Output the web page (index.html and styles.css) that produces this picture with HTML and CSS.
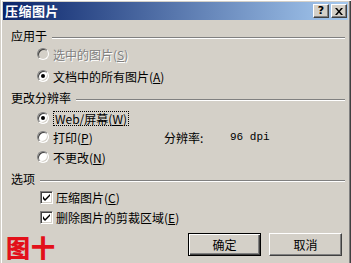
FILE: index.html
```html
<!DOCTYPE html>
<html>
<head>
<meta charset="utf-8">
<link rel="stylesheet" href="styles.css">
</head>
<body>
<div class="win">
  <div class="titlebar">
    <span class="title">压缩图片</span>
    <div class="tbtns">
      <span class="tbtn help">?</span>
      <span class="tbtn close"><svg width="8" height="7" viewBox="0 0 8 7"><path d="M0 0h2l2 2.5L6 0h2L5 3.5 8 7H6L4 4.5 2 7H0l3-3.5z" fill="#000"/></svg></span>
    </div>
  </div>
  <div class="content">
    <div class="ghead h1"><span>应用于</span><i class="rule"></i></div>
    <div class="opt r1 disabled"><span class="radio"></span><span class="lbl">选中的图片(<u>S</u>)</span></div>
    <div class="opt r2"><span class="radio on"></span><span class="lbl">文档中的所有图片(<u>A</u>)</span></div>

    <div class="ghead h2"><span>更改分辨率</span><i class="rule"></i></div>
    <div class="opt r3"><span class="radio on"></span><span class="lbl focus">Web/屏幕(<u>W</u>)</span></div>
    <div class="opt r4"><span class="radio"></span><span class="lbl w-print">打印(<u>P</u>)</span><span class="res">分辨率:</span><span class="dpi">96 dpi</span></div>
    <div class="opt r5"><span class="radio"></span><span class="lbl">不更改(<u>N</u>)</span></div>

    <div class="ghead h3"><span>选项</span><i class="rule"></i></div>
    <div class="opt c1"><span class="check"><svg width="7" height="7" viewBox="0 0 7 7"><path d="M0 2v3l2 2 5-5V-0L2 5z" fill="#000"/></svg></span><span class="lbl">压缩图片(<u>C</u>)</span></div>
    <div class="opt c2"><span class="check"><svg width="7" height="7" viewBox="0 0 7 7"><path d="M0 2v3l2 2 5-5V-0L2 5z" fill="#000"/></svg></span><span class="lbl">删除图片的剪裁区域(<u>E</u>)</span></div>

    <div class="footer">
      <span class="fig">图十</span>
      <div class="btns">
        <span class="btn default">确定</span>
        <span class="btn">取消</span>
      </div>
    </div>
  </div>
</div>
</body>
</html>
```
FILE: styles.css
```css
html, body {
  margin: 0;
  padding: 0;
  background: #D4D0C8;
}
.win {
  width: 351px;
  height: 263px;
  box-sizing: border-box;
  background: #D4D0C8;
  border-left: 1px solid #D4D0C8;
  box-shadow: inset 1px 1px 0 #fff, inset -1px 0 0 #404040, inset -2px 0 0 #808080;
  padding: 2px 2px 0 2px;
  overflow: hidden;
  font-family: "Noto Sans CJK SC", "Noto Sans", sans-serif;
  font-size: 12px;
  color: #000;
}
.titlebar {
  height: 18px;
  margin-right: 1px;
  display: flex;
  align-items: center;
  justify-content: space-between;
  background: linear-gradient(to right, #0A246A, #A6CAF0);
}
.title {
  color: #fff;
  font-weight: 700;
  font-size: 13px;
  line-height: 18px;
  padding-left: 2px;
  letter-spacing: 0.5px;
}
.tbtns {
  display: flex;
  gap: 2px;
  padding-right: 1px;
}
.tbtn {
  width: 16px;
  height: 14px;
  box-sizing: border-box;
  background: #D4D0C8;
  border: 1px solid;
  border-color: #fff #404040 #404040 #fff;
  box-shadow: inset -1px -1px 0 #808080;
  display: flex;
  align-items: center;
  justify-content: center;
  font-family: "DejaVu Sans", sans-serif;
  font-weight: 700;
  font-size: 11px;
  line-height: 12px;
}
.content {
  display: flex;
  flex-direction: column;
}
.ghead {
  height: 18px;
  display: flex;
  align-items: center;
  padding-left: 8px;
  gap: 5px;
  padding-right: 4px;
}
.rule {
  flex: 1;
  height: 0;
  border-top: 1px solid #808080;
  border-bottom: 1px solid #fff;
  margin-top: 6px;
}
.h1 { margin-top: 6px; }
.h2 { margin-top: 3px; }
.h3 { margin-top: 3px; }
.opt {
  height: 18px;
  display: flex;
  align-items: center;
  padding-left: 34px;
}
.r1 { margin-top: 1px; }
.r2 { margin-top: 4px; }
.r3 { margin-top: 3px; }
.r4 { margin-top: 1px; }
.r5 { margin-top: 2px; }
.c1 { margin-top: 1px; padding-left: 37px; }
.c2 { margin-top: 2px; padding-left: 37px; }
.radio {
  width: 12px;
  height: 12px;
  box-sizing: border-box;
  border-radius: 50%;
  background: #fff;
  border: 1px solid;
  border-color: #808080 #fff #fff #808080;
  box-shadow: inset 1px 1px 0 #404040, inset -1px -1px 0 #D4D0C8;
  position: relative;
  flex: none;
}
.radio.on::after {
  content: "";
  position: absolute;
  left: 3px;
  top: 3px;
  width: 4px;
  height: 4px;
  border-radius: 50%;
  background: #000;
}
.disabled .radio { background: #D4D0C8; }
.disabled .lbl { color: #808080; text-shadow: 1px 1px 0 #fff; }
.lbl {
  margin-left: 4px;
  line-height: 13px;
  white-space: nowrap;
}
.focus {
  outline: 1px dotted #000;
  outline-offset: 0;
  padding: 0 1px;
  margin-left: 5px;
}
.w-print { width: 111px; }
.res { width: 66px; }
.dpi {
  font-family: "Liberation Mono", monospace;
  font-size: 11px;
}
.check {
  width: 13px;
  height: 13px;
  box-sizing: border-box;
  background: #fff;
  border: 1px solid;
  border-color: #808080 #fff #fff #808080;
  box-shadow: inset 1px 1px 0 #404040, inset -1px -1px 0 #D4D0C8;
  display: flex;
  align-items: center;
  justify-content: center;
  flex: none;
}
.check + .lbl { margin-left: 3px; }
.footer {
  margin-top: 7px;
  display: flex;
  justify-content: space-between;
  align-items: flex-start;
  padding-left: 3px;
  padding-right: 7px;
}
.fig {
  color: #E3101A;
  font-weight: 900;
  font-size: 24px;
  line-height: 24px;
  margin-top: 2px;
  letter-spacing: 1px;
}
.btns {
  display: flex;
  gap: 8px;
}
.btn {
  width: 73px;
  height: 23px;
  box-sizing: border-box;
  display: flex;
  align-items: center;
  justify-content: center;
  background: #D4D0C8;
  border: 1px solid;
  border-color: #fff #404040 #404040 #fff;
  box-shadow: inset -1px -1px 0 #808080;
}
.btn.default {
  border: 1px solid #000;
  box-shadow: inset 1px 1px 0 #fff, inset -1px -1px 0 #404040, inset -2px -2px 0 #808080;
}
```
